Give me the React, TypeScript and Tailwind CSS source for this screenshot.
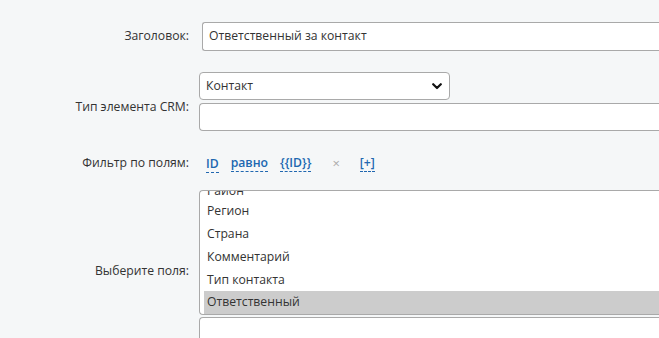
import React from "react";

const font = { fontFamily: '"Open Sans", "Noto Sans", sans-serif' };

function Label({ children, className = "" }: { children: React.ReactNode; className?: string }) {
  return (
    <div className={"w-[199px] shrink-0 pr-[10px] text-right text-[12.2px] text-[#333] " + className}>
      {children}
    </div>
  );
}

function Link({ children }: { children: React.ReactNode }) {
  return (
    <span className="font-semibold text-[#2067b0] border-b border-dashed border-[#2067b0] leading-[17px]">
      {children}
    </span>
  );
}

export default function App() {
  const items = ["Район", "Регион", "Страна", "Комментарий", "Тип контакта", "Ответственный"];
  return (
    <div className="w-[659px] h-[338px] overflow-hidden bg-[#f5f7f8] text-[12.2px] text-[#333]" style={font}>
      {/* Title */}
      <div className="flex items-center pt-[22px]">
        <Label>Заголовок:</Label>
        <div className="ml-[3px] flex-1 h-[29px] bg-white border border-[#a9a9a9] rounded-l-[3px] border-r-0 flex items-center pl-[6px]">
          Ответственный за контакт
        </div>
      </div>

      {/* CRM type */}
      <div className="flex pt-[21px]">
        <Label className="pt-[26px]">Тип элемента CRM:</Label>
        <div className="flex-1 flex flex-col gap-[3px]">
          <div className="w-[251px] h-[28px] bg-white border border-[#a9a9a9] rounded-[4px] flex items-center justify-between pl-[6px] pr-[7px]">
            <span>Контакт</span>
            <svg width="10" height="7" viewBox="0 0 10 7">
              <path d="M1.2 1.2 L5 5 L8.8 1.2" fill="none" stroke="#111" strokeWidth="2.2" strokeLinecap="round" strokeLinejoin="round" />
            </svg>
          </div>
          <div className="h-[28px] bg-white border border-[#a9a9a9] rounded-l-[4px] border-r-0" />
        </div>
      </div>

      {/* Filter */}
      <div className="flex items-center pt-[22px] h-[43px]">
        <Label>Фильтр по полям:</Label>
        <div className="flex items-center pl-[7px]">
          <Link>ID</Link>
          <span className="ml-[12px]"><Link>равно</Link></span>
          <span className="ml-[12px]"><Link>{"{{ID}}"}</Link></span>
          <span className="ml-[21px] text-[#aaa] text-[13px]">×</span>
          <span className="ml-[20px]"><Link>[+]</Link></span>
        </div>
      </div>

      {/* Fields */}
      <div className="flex pt-[16px]">
        <Label className="pt-[72px]">Выберите поля:</Label>
        <div className="flex-1 flex flex-col gap-[2px]">
          <div className="h-[125px] bg-white border border-[#a9a9a9] border-r-0 rounded-l-[4px] overflow-hidden flex flex-col justify-end pl-[4px]">
            {items.map((it, i) => (
              <div
                key={it}
                className={
                  "h-[22.75px] shrink-0 flex items-center pl-[3px] " +
                  (i === 0 ? "pt-[5px] " : "") +
                  (i === items.length - 1 ? "bg-[#cccccc]" : "")
                }
              >
                {it}
              </div>
            ))}
          </div>
          <div className="h-[40px] bg-white border border-[#a9a9a9] border-r-0 rounded-l-[4px]" />
        </div>
      </div>
    </div>
  );
}
